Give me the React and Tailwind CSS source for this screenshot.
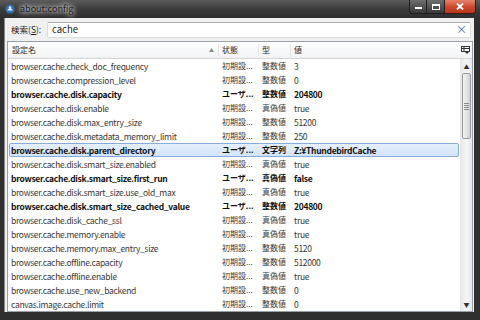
import React from "react";

const rows = [
  ["browser.cache.check_doc_frequency", "初期設...", "整数値", "3", false],
  ["browser.cache.compression_level", "初期設...", "整数値", "0", false],
  ["browser.cache.disk.capacity", "ユーザ...", "整数値", "204800", true],
  ["browser.cache.disk.enable", "初期設...", "真偽値", "true", false],
  ["browser.cache.disk.max_entry_size", "初期設...", "整数値", "51200", false],
  ["browser.cache.disk.metadata_memory_limit", "初期設...", "整数値", "250", false],
  ["browser.cache.disk.parent_directory", "ユーザ...", "文字列", "Z:¥ThundebirdCache", true],
  ["browser.cache.disk.smart_size.enabled", "初期設...", "真偽値", "true", false],
  ["browser.cache.disk.smart_size.first_run", "ユーザ...", "真偽値", "false", true],
  ["browser.cache.disk.smart_size.use_old_max", "初期設...", "真偽値", "true", false],
  ["browser.cache.disk.smart_size_cached_value", "ユーザ...", "整数値", "204800", true],
  ["browser.cache.disk_cache_ssl", "初期設...", "真偽値", "true", false],
  ["browser.cache.memory.enable", "初期設...", "真偽値", "true", false],
  ["browser.cache.memory.max_entry_size", "初期設...", "整数値", "5120", false],
  ["browser.cache.offline.capacity", "初期設...", "整数値", "512000", false],
  ["browser.cache.offline.enable", "初期設...", "真偽値", "true", false],
  ["browser.cache.use_new_backend", "初期設...", "整数値", "0", false],
  ["canvas.image.cache.limit", "初期設...", "整数値", "0", false],
];

const SELECTED = 6;

const TitleBar = () => (
  <div className="flex h-[18px] items-start bg-gradient-to-b from-[#5c5c5c] via-[#3b3b3b] to-[#2f2f2f]">
    <div className="flex flex-1 items-center gap-[5px] pl-[5px] pt-[3px]">
      <svg width="10" height="10" viewBox="0 0 10 10">
        <circle cx="5" cy="5" r="4.6" fill="#2f6fb8" />
        <path d="M2 6.5 Q5 2 8 6.5 Z" fill="#e8eef6" />
        <circle cx="5" cy="3.6" r="1.3" fill="#e8eef6" />
      </svg>
      <span className="text-[9px] leading-[12px] text-[#1e1e1e] [text-shadow:0_0_4px_#ffffff,0_0_6px_#ffffff]">
        about:config
      </span>
    </div>
    <div className="mr-[4px] flex h-[14px]">
      <div className="flex w-[18px] items-center justify-center rounded-bl-[3px] border border-t-0 border-[#1f1f1f] bg-gradient-to-b from-[#6e6e6e] to-[#3a3a3a]">
        <div className="mt-[3px] h-[2px] w-[7px] bg-white" />
      </div>
      <div className="flex w-[18px] items-center justify-center border border-t-0 border-l-0 border-[#1f1f1f] bg-gradient-to-b from-[#6e6e6e] to-[#3a3a3a]">
        <div className="h-[6px] w-[8px] border border-t-2 border-white" />
      </div>
      <div className="flex w-[31px] items-center justify-center rounded-br-[3px] border border-t-0 border-l-0 border-[#3a1a12] bg-gradient-to-b from-[#e8826c] via-[#cf4b2f] to-[#b8361c]">
        <svg width="8" height="7" viewBox="0 0 8 7">
          <path d="M1 0.5 L7 6.5 M7 0.5 L1 6.5" stroke="#fff" strokeWidth="1.8" />
        </svg>
      </div>
    </div>
  </div>
);

const SearchRow = () => (
  <div className="flex h-[23px] items-center pl-[4px] pr-[2px]">
    <span className="w-[36px] text-[8.5px] text-[#1a1a1a]">
      検索(<span className="underline">S</span>):
    </span>
    <div className="flex h-[16px] flex-1 items-center justify-between rounded-[2px] border border-[#d7dbe0] border-t-[#abadb3] bg-white pl-[4px] pr-[3px]">
      <span className="text-[9.5px] text-[#222]">cache</span>
      <span className="text-[11px] leading-none text-[#3b6ea5]">×</span>
    </div>
  </div>
);

const Header = () => (
  <div className="flex h-[17px] items-center border-b border-[#d5d5d5] bg-gradient-to-b from-white to-[#f1f2f4] text-[8px] text-[#2a2a2a]">
    <div className="flex w-[210px] items-center justify-between pl-[4px] pr-[4px]">
      <span>設定名</span>
      <span className="text-[5px] text-[#8a8a8a]">▲</span>
    </div>
    <div className="w-[40px] border-l border-[#e3e3e3] pl-[3px]">状態</div>
    <div className="w-[32px] border-l border-[#e3e3e3] pl-[3px]">型</div>
    <div className="flex-1 border-l border-[#e3e3e3] pl-[3px]">値</div>
    <div className="flex w-[14px] items-center justify-center">
      <svg width="9" height="8" viewBox="0 0 9 8">
        <rect x="0.5" y="0.5" width="8" height="5" fill="none" stroke="#333" />
        <path d="M0.5 2.5 H8.5 M3 0.5 V5.5" stroke="#333" />
        <path d="M4 6 L8 6 L6 8 Z" fill="#333" />
      </svg>
    </div>
  </div>
);

const Row = ({ r, selected }) => {
  const [name, status, type, value, bold] = r;
  return (
    <div
      className={
        "flex h-[14px] items-center rounded-[2px] border " +
        (selected
          ? "border-[#84acdd] bg-gradient-to-b from-[#e4effc] to-[#d3e4f8]"
          : "border-transparent") +
        (bold ? " font-bold text-[#111]" : " text-[#383838]")
      }
    >
      <div className="w-[208px] truncate pl-[1px] text-[8.5px] tracking-[-0.3px]">{name}</div>
      <div className="w-[40px] pl-[4px] text-[8px]">{status}</div>
      <div className="w-[32px] pl-[4px] text-[8px]">{type}</div>
      <div className="flex-1 pl-[4px] text-[8.5px] tracking-[-0.3px]">{value}</div>
    </div>
  );
};

const Scrollbar = () => (
  <div className="flex w-[12px] flex-col border-l border-[#e6e6e6] bg-gradient-to-r from-[#e9e9e9] via-[#f5f5f5] to-[#e9e9e9]">
    <div className="flex h-[14px] items-center justify-center text-[6px] text-[#333]">▲</div>
    <div className="mx-[1px] flex h-[66px] flex-col items-center justify-center gap-[1px] rounded-[2px] border border-[#9a9a9a] bg-gradient-to-r from-[#f3f3f3] via-[#e4e4e4] to-[#d2d2d2]">
      <div className="h-px w-[5px] bg-[#8a8a8a]" />
      <div className="h-px w-[5px] bg-[#8a8a8a]" />
      <div className="h-px w-[5px] bg-[#8a8a8a]" />
      <div className="h-px w-[5px] bg-[#8a8a8a]" />
    </div>
    <div className="flex-1" />
    <div className="flex h-[14px] items-center justify-center text-[6px] text-[#333]">▼</div>
  </div>
);

export default function App() {
  return (
    <div className="flex h-[320px] w-[480px] flex-col overflow-hidden bg-[#2f2f2f] font-['Noto_Sans_CJK_JP','Liberation_Sans',sans-serif]">
      <TitleBar />
      <div className="flex flex-1 pb-[8px] pl-[4px] pr-[6px]">
        <div className="flex flex-1 flex-col border-l border-[#8a8a8a] bg-[#f0f0f0] pl-[2px] pr-[1px]">
          <SearchRow />
          <div className="flex flex-1 flex-col border border-[#9aa0a8] bg-white">
            <Header />
            <div className="flex flex-1">
              <div className="flex-1 px-[1px] leading-[14px]">
                {rows.map((r, i) => (
                  <Row key={r[0]} r={r} selected={i === SELECTED} />
                ))}
              </div>
              <Scrollbar />
            </div>
          </div>
        </div>
      </div>
    </div>
  );
}
